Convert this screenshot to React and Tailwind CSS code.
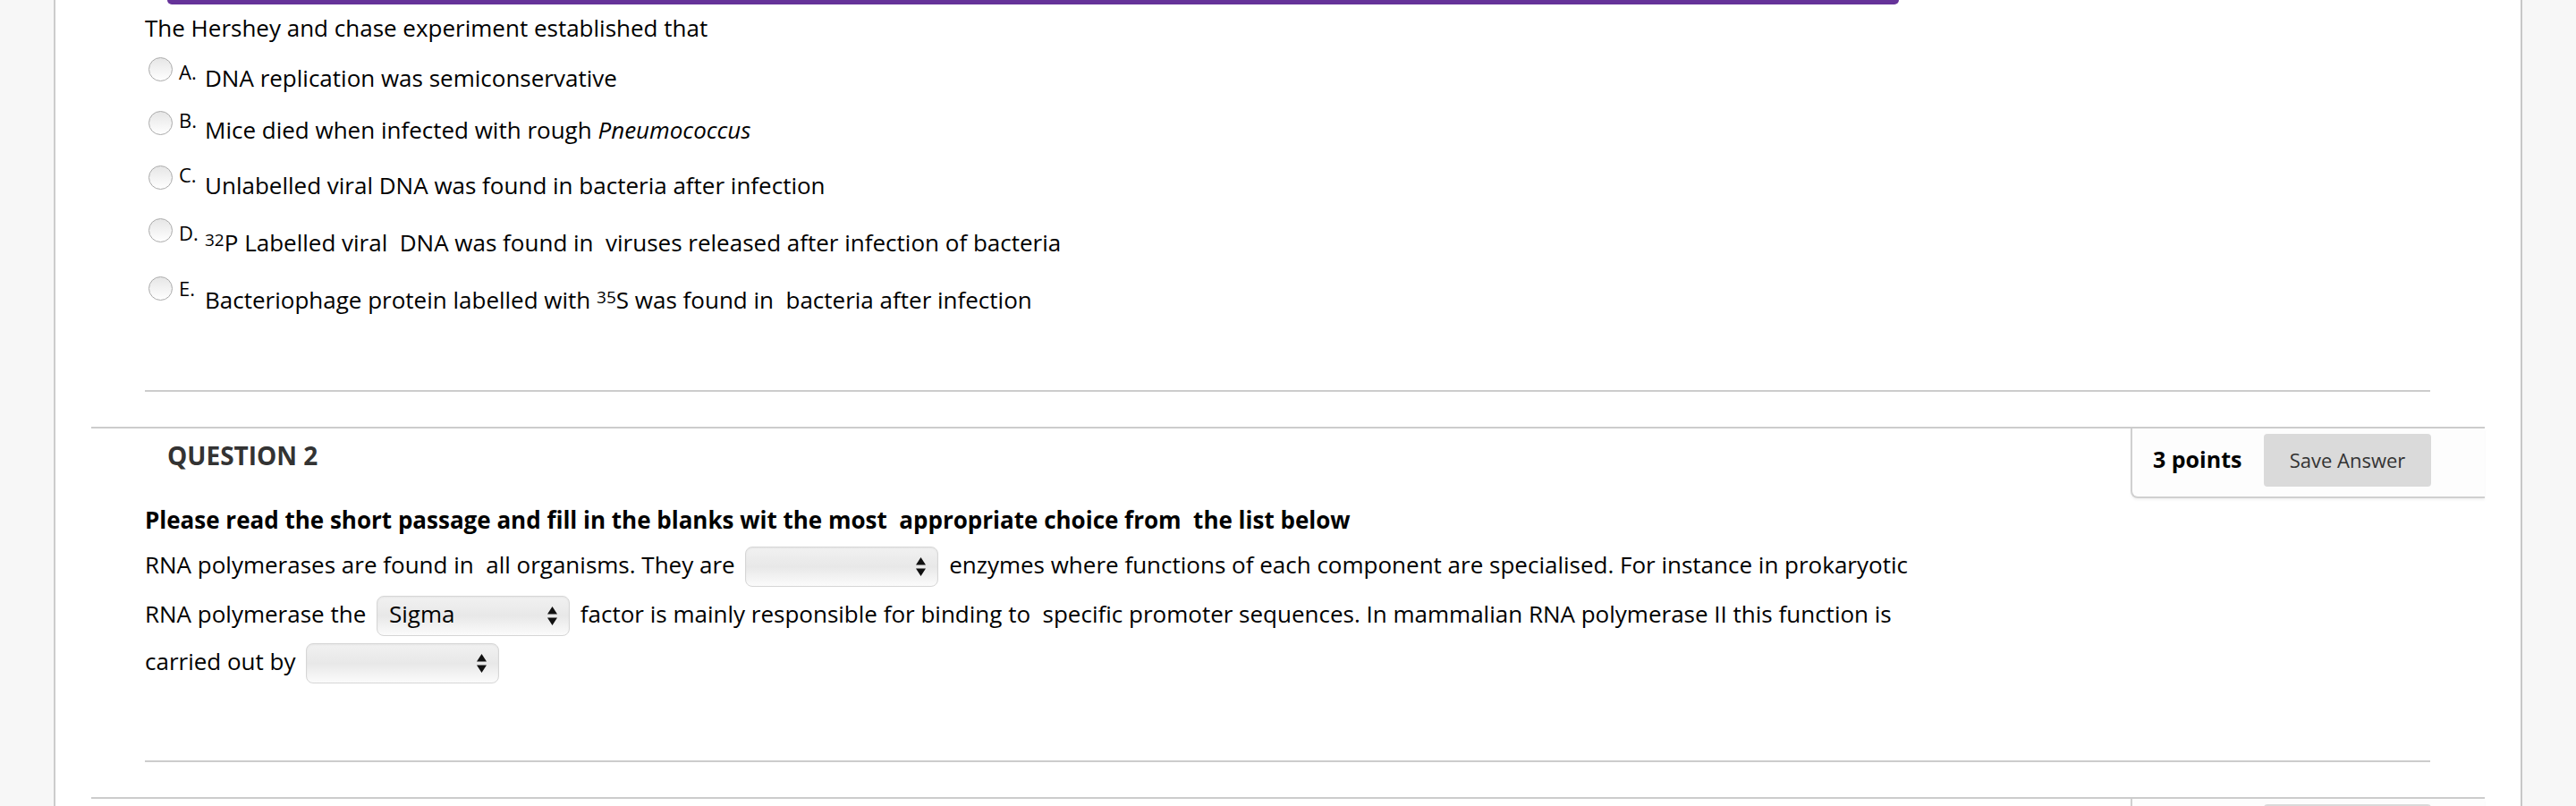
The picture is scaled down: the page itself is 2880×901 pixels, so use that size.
import React from 'react';

const Sup = ({ children }) => (
  <span className="inline-block align-top text-[19px] leading-[19px]">{children}</span>
);

const options = [
  { key: 'A', h: 'h-[60px]', labelMt: 'mt-[6px]', textMt: 'mt-[11px]', text: <>DNA replication was semiconservative</> },
  { key: 'B', h: 'h-[61px]', labelMt: 'mt-[0px]', textMt: 'mt-[9px]', text: <>Mice died when infected with rough <i>Pneumococcus</i></> },
  { key: 'C', h: 'h-[59px]', labelMt: 'mt-[0px]', textMt: 'mt-[10px]', text: <>Unlabelled viral DNA was found in bacteria after infection</> },
  { key: 'D', h: 'h-[65px]', labelMt: 'mt-[6px]', textMt: 'mt-[15px]', text: <><Sup>32</Sup>P Labelled viral&nbsp; DNA was found in&nbsp; viruses released after infection of bacteria</> },
  { key: 'E', h: 'h-[127px]', labelMt: 'mt-[3px]', textMt: 'mt-[14px]', text: <>Bacteriophage protein labelled with <Sup>35</Sup>S was found in&nbsp; bacteria after infection</> },
];

const Select = ({ value }) => (
  <span className="inline-flex align-top justify-between w-[216px] h-[45px] mx-[5px] pl-[13px] pr-[13px] rounded-[8px] border border-[#d6d6d6] bg-linear-to-b from-[#f1f1f1] via-[#e8e8e8] to-[#fbfbfb] shadow-[inset_0_1px_2px_rgba(0,0,0,0.05)]">
    <span className="text-[26px] leading-[38px]">{value}</span>
    <svg className="self-center" width="11" height="21" viewBox="0 0 11 21">
      <path d="M5.5 0 L11 8.5 H0 Z M0 12.5 H11 L5.5 21 Z" fill="#111" />
    </svg>
  </span>
);

const PointsBox = ({ showText = true }) => (
  <div className="w-[396px] h-[78px] shrink-0 flex items-start pl-[23px] pt-[6px] border-l-2 border-b-2 border-[#d0d0d0] rounded-bl-[8px] bg-[#fdfdfd] shadow-[0_2px_3px_rgba(0,0,0,0.05)]">
    <span className="w-[102px] mt-[16px] text-[25px] leading-[25px] font-bold whitespace-nowrap">{showText ? '3 points' : ''}</span>
    <button className="ml-[22px] w-[187px] h-[59px] rounded-[4px] bg-[#dadada] text-[22px] text-[#333] flex items-center justify-center">
      {showText ? 'Save Answer' : ''}
    </button>
  </div>
);

export default function App() {
  return (
    <div className="flex h-[901px] w-[2880px] overflow-hidden bg-white text-black font-['Open_Sans',sans-serif]">
      <div className="w-[62px] shrink-0 bg-[#f7f7f7] border-r-2 border-[#cccccc]" />

      <main className="flex-1 min-w-0">
        {/* bottom of previous purple box */}
        <div className="ml-[125px] w-[1936px] h-[5px] rounded-b-[10px] bg-[#663399]" />

        <div className="pl-[100px] mt-[14px] text-[26px] leading-[25px]">The Hershey and chase experiment established that</div>

        <div className="ml-[104px] mt-[20px] flex flex-col">
          {options.map((o) => (
            <div key={o.key} className={`flex items-start shrink-0 ${o.h}`}>
              <span className="w-[27px] h-[27px] shrink-0 rounded-full border border-[#aaaaaa] bg-linear-to-b from-[#e6e6e6] to-white" />
              <span className={`w-[29px] shrink-0 ml-[7px] text-[22px] leading-[20px] ${o.labelMt}`}>{o.key}.</span>
              <div className={`text-[26px] leading-[25px] whitespace-nowrap ${o.textMt}`}>{o.text}</div>
            </div>
          ))}
        </div>

        <div className="ml-[100px] mr-[101px] h-[2px] bg-[#cccccc]" />

        {/* Question 2 */}
        <section className="mx-[40px] mt-[39px] border-t-2 border-[#cccccc]">
          <div className="flex justify-between items-start">
            <h2 className="pl-[85px] pt-[17px] text-[28px] leading-[26px] font-bold text-[#333]">QUESTION 2</h2>
            <PointsBox />
          </div>

          <div className="pl-[60px]">
            <p className="mt-[12px] text-[26px] leading-[25px] font-bold whitespace-nowrap">
              Please read the short passage and fill in the blanks wit the most&nbsp; appropriate choice from&nbsp; the list below
            </p>
            <div className="mt-[17px] h-[55px] text-[26px] leading-[40px] whitespace-nowrap">
              RNA polymerases are found in&nbsp; all organisms. They are <Select value="" /> enzymes where functions of each component are specialised. For instance in prokaryotic
            </div>
            <div className="h-[53px] text-[26px] leading-[40px] whitespace-nowrap">
              RNA polymerase the <Select value="Sigma" /> factor is mainly responsible for binding to&nbsp; specific promoter sequences. In mammalian RNA polymerase II this function is
            </div>
            <div className="h-[45px] text-[26px] leading-[40px] whitespace-nowrap">
              carried out by <Select value="" />
            </div>
            <div className="mt-[86px] mr-[61px] h-[2px] bg-[#cccccc]" />
          </div>
        </section>

        {/* next question, cut off by the window */}
        <section className="mx-[40px] mt-[39px] border-t-2 border-[#cccccc]">
          <div className="flex justify-end items-start">
            <PointsBox showText={false} />
          </div>
        </section>
      </main>

      <div className="w-[62px] shrink-0 bg-[#f7f7f7] border-l-2 border-[#c8c8c8]" />
    </div>
  );
}
